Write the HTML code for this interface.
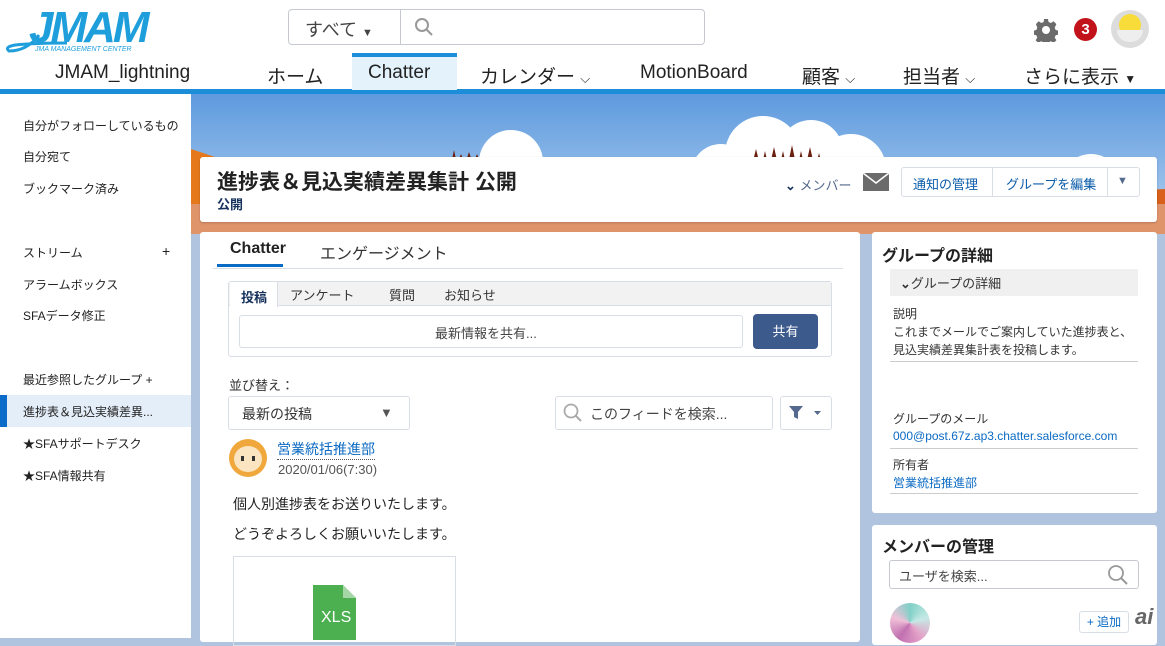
<!DOCTYPE html>
<html><head><meta charset="utf-8"><style>
*{margin:0;padding:0;box-sizing:border-box}
body{width:1165px;height:638px;overflow:hidden;position:relative;background:#b0c4df;font-family:"Liberation Sans","Noto Sans CJK JP",sans-serif;color:#16325c}
.a{position:absolute;white-space:nowrap}
.nav{font-size:19px;color:#222;top:62px}
.side{font-size:12px;color:#222;left:23px}
.btn{border:1px solid #d8dde6;background:#fff;border-radius:3px}
</style></head><body>
<!-- header -->
<div class="a" style="left:0;top:0;width:1165px;height:90px;background:#fff"></div>
<div class="a" style="left:0;top:89px;width:1165px;height:5px;background:#1c8dd8"></div>
<svg class="a" style="left:5px;top:3px" width="160" height="52" viewBox="0 0 160 52">
<text x="24" y="39" font-family="Liberation Sans" font-weight="bold" font-style="italic" font-size="44" fill="#1e9fdc" letter-spacing="-3">JMAM</text>
<path d="M34 32 Q22 48 4 48 Q-1 44 10 42 Q30 40 62 40" stroke="#1e9fdc" stroke-width="3" fill="none"/>
<text x="30" y="48" font-family="Liberation Sans" font-style="italic" font-size="7" fill="#1e9fdc">JMA MANAGEMENT CENTER</text>
</svg>
<div class="a btn" style="left:288px;top:9px;width:417px;height:36px;border-color:#c6cad0;border-radius:4px"></div>
<div class="a" style="left:400px;top:9px;width:1px;height:36px;background:#c6cad0"></div>
<div class="a" style="left:305px;top:16px;font-size:18px;color:#444">すべて <span style="font-size:11px">▼</span></div>
<svg class="a" style="left:414px;top:17px" width="20" height="20"><circle cx="8" cy="8" r="6" stroke="#999" stroke-width="2" fill="none"/><path d="M12.5 12.5L18 18" stroke="#999" stroke-width="2"/></svg>
<svg class="a" style="left:1034px;top:18px" width="24" height="24" viewBox="0 0 24 24"><path d="M10 1h4l.6 3 2.4 1 2.6-1.7 2.8 2.8L20.7 9.6l1 2.4 3 .6v4l-3 .6-1 2.4 1.7 2.6-2.8 2.8-2.6-1.7-2.4 1-.6 3h-4l-.6-3-2.4-1-2.6 1.7-2.8-2.8 1.7-2.6-1-2.4-3-.6v-4l3-.6 1-2.4L1.9 6.1 4.7 3.3 7.3 5l2.4-1z" fill="#6b6b6b"/><circle cx="12" cy="12" r="4" fill="#fff"/></svg>
<div class="a" style="left:1074px;top:18px;width:23px;height:23px;border-radius:50%;background:#c2131b;color:#fff;font-weight:bold;font-size:15px;text-align:center;line-height:23px">3</div>
<div class="a" style="left:1111px;top:10px;width:38px;height:38px;border-radius:50%;background:#dcdcdc"></div>
<div class="a" style="left:1119px;top:14px;width:22px;height:22px;border-radius:50%;background:#f8dc3a"></div>
<div class="a" style="left:1117px;top:30px;width:26px;height:12px;border-radius:0 0 13px 13px;background:#eee"></div>
<div class="a nav" style="left:55px">JMAM_lightning</div>
<div class="a nav" style="left:267px">ホーム</div>
<div class="a" style="left:352px;top:53px;width:105px;height:37px;background:#e3f2fb;border-top:4px solid #1c8dd8"></div>
<div class="a nav" style="left:368px">Chatter</div>
<div class="a nav" style="left:480px">カレンダー <span style="font-size:13px">⌵</span></div>
<div class="a nav" style="left:640px">MotionBoard</div>
<div class="a nav" style="left:802px">顧客 <span style="font-size:13px">⌵</span></div>
<div class="a nav" style="left:903px">担当者 <span style="font-size:13px">⌵</span></div>
<div class="a nav" style="left:1024px">さらに表示 <span style="font-size:12px">▼</span></div>
<!-- sidebar -->
<div class="a" style="left:0;top:94px;width:191px;height:544px;background:#fff"></div>
<div class="a side" style="top:117px">自分がフォローしているもの</div>
<div class="a side" style="top:148px">自分宛て</div>
<div class="a side" style="top:180px">ブックマーク済み</div>
<div class="a side" style="top:244px">ストリーム</div><div class="a side" style="left:162px;top:243px;font-size:14px">+</div>
<div class="a side" style="top:276px">アラームボックス</div>
<div class="a side" style="top:307px">SFAデータ修正</div>
<div class="a side" style="top:371px">最近参照したグループ +</div>
<div class="a" style="left:0;top:395px;width:191px;height:32px;background:#e4eef9"></div>
<div class="a" style="left:0;top:395px;width:7px;height:32px;background:#0a6cc8"></div>
<div class="a side" style="top:403px">進捗表＆見込実績差異...</div>
<div class="a side" style="top:435px">★SFAサポートデスク</div>
<div class="a side" style="top:467px">★SFA情報共有</div>
<!-- banner -->
<svg class="a" style="left:191px;top:94px" width="974" height="140" viewBox="0 0 974 140">
<defs><linearGradient id="g" x1="0" y1="0" x2="0" y2="1"><stop offset="0" stop-color="#5e9ade"/><stop offset="1" stop-color="#b4d2f0"/></linearGradient></defs>
<rect width="974" height="140" fill="url(#g)"/>
<circle cx="320" cy="68" r="32" fill="#fff"/>
<circle cx="572" cy="60" r="38" fill="#fff"/><circle cx="620" cy="58" r="32" fill="#fff"/><circle cx="660" cy="75" r="35" fill="#fff"/><circle cx="530" cy="80" r="30" fill="#fff"/>
<circle cx="900" cy="90" r="30" fill="#fff"/>
<path d="M560 75 l5 -20 5 20 4 -18 4 18 5 -22 5 22 4 -18 4 18 5 -24 5 24 4 -18 4 18 5 -22 5 22 4 -16 4 16z" fill="#6b2010"/>
<path d="M260 70 l3 -14 3 14 4 -10 4 10 4 -12 4 12 4 -10 4 10z" fill="#6b2010"/>
<path d="M600 140 L660 78 L720 70 L790 85 L830 140z" fill="#e57a1f"/>
<path d="M800 140 L880 100 L974 95 L974 140z" fill="#d9601a"/>
<path d="M0 140 L0 55 L30 65 L60 140z" fill="#e6781c"/>
<path d="M730 140 L830 90 L900 140z" fill="#f0902a"/>
<rect x="0" y="110" width="974" height="30" fill="#e0946a"/>
</svg>
<div class="a" style="left:200px;top:157px;width:957px;height:65px;background:#fff;border-radius:3px;box-shadow:0 1px 2px rgba(0,0,0,.2)"></div>
<div class="a" style="left:217px;top:166px;font-size:21px;font-weight:bold;color:#222">進捗表＆見込実績差異集計 公開</div>
<div class="a" style="left:217px;top:194px;font-size:13px;font-weight:bold;color:#16325c">公開</div>
<div class="a" style="left:785px;top:175px;font-size:13px;color:#54698d"><b style="color:#16325c">⌄</b> メンバー</div>
<svg class="a" style="left:863px;top:173px" width="26" height="18"><rect width="26" height="18" fill="#6b6b6b"/><path d="M0 0L13 10 26 0" stroke="#fff" stroke-width="1.5" fill="none"/></svg>
<div class="a btn" style="left:901px;top:167px;width:239px;height:30px"></div>
<div class="a" style="left:992px;top:167px;width:1px;height:30px;background:#d8dde6"></div>
<div class="a" style="left:1107px;top:167px;width:1px;height:30px;background:#d8dde6"></div>
<div class="a" style="left:913px;top:174px;font-size:13px;color:#0b5cab">通知の管理</div>
<div class="a" style="left:1006px;top:174px;font-size:13px;color:#0b5cab">グループを編集</div>
<div class="a" style="left:1117px;top:175px;font-size:11px;color:#54698d">▼</div>
<!-- main card -->
<div class="a" style="left:200px;top:232px;width:660px;height:410px;background:#fff;border-radius:3px"></div>
<div class="a" style="left:230px;top:240px;font-size:16px;font-weight:bold;color:#222">Chatter</div>
<div class="a" style="left:320px;top:240px;font-size:16px;color:#333">エンゲージメント</div>
<div class="a" style="left:213px;top:268px;width:630px;height:1px;background:#d8dde6"></div>
<div class="a" style="left:217px;top:264px;width:66px;height:3px;background:#0b6ac3"></div>
<div class="a" style="left:228px;top:281px;width:604px;height:76px;border:1px solid #d8dde6;border-radius:3px"></div>
<div class="a" style="left:229px;top:282px;width:602px;height:24px;background:#f2f2f2;border-bottom:1px solid #d8dde6"></div>
<div class="a" style="left:230px;top:282px;width:48px;height:25px;background:#fff;border-right:1px solid #d8dde6"></div>
<div class="a" style="left:241px;top:287px;font-size:13px;font-weight:bold;color:#16325c">投稿</div>
<div class="a" style="left:290px;top:285px;font-size:13px;color:#333">アンケート</div>
<div class="a" style="left:389px;top:285px;font-size:13px;color:#333">質問</div>
<div class="a" style="left:444px;top:285px;font-size:13px;color:#333">お知らせ</div>
<div class="a btn" style="left:239px;top:315px;width:504px;height:33px"></div>
<div class="a" style="left:435px;top:323px;font-size:13px;color:#444">最新情報を共有...</div>
<div class="a" style="left:753px;top:314px;width:65px;height:35px;background:#3c5a8c;border-radius:4px;color:#fff;font-size:13px;text-align:center;line-height:35px">共有</div>
<div class="a" style="left:229px;top:375px;font-size:13px;color:#333">並び替え：</div>
<div class="a btn" style="left:228px;top:396px;width:182px;height:34px"></div>
<div class="a" style="left:242px;top:404px;font-size:14px;color:#333">最新の投稿</div>
<div class="a" style="left:380px;top:405px;font-size:13px;color:#555">▼</div>
<div class="a btn" style="left:555px;top:396px;width:218px;height:34px"></div>
<svg class="a" style="left:563px;top:403px" width="20" height="20"><circle cx="8" cy="8" r="6.5" stroke="#aaa" stroke-width="1.8" fill="none"/><path d="M12.5 12.5L18 18" stroke="#aaa" stroke-width="2"/></svg>
<div class="a" style="left:590px;top:404px;font-size:14px;color:#444">このフィードを検索...</div>
<div class="a btn" style="left:780px;top:396px;width:52px;height:34px"></div>
<svg class="a" style="left:789px;top:405px" width="36" height="16"><path d="M0 1h14L9 7v7l-4-2V7z" fill="#54698d"/><path d="M25 6h7l-3.5 4z" fill="#54698d"/></svg>
<div class="a" style="left:229px;top:439px;width:38px;height:38px;border-radius:50%;background:#f0a83c"></div>
<div class="a" style="left:234px;top:446px;width:28px;height:26px;border-radius:50%;background:#fbe5c0"></div>
<div class="a" style="left:241px;top:456px;width:3px;height:5px;background:#333"></div>
<div class="a" style="left:252px;top:456px;width:3px;height:5px;background:#333"></div>
<div class="a" style="left:277px;top:439px;font-size:14px;color:#0b6ac3;border-bottom:1px dotted #555">営業統括推進部</div>
<div class="a" style="left:278px;top:462px;font-size:13px;color:#555">2020/01/06(7:30)</div>
<div class="a" style="left:233px;top:494px;font-size:14px;color:#222">個人別進捗表をお送りいたします。</div>
<div class="a" style="left:233px;top:524px;font-size:14px;color:#222">どうぞよろしくお願いいたします。</div>
<div class="a" style="left:233px;top:556px;width:223px;height:90px;border:1px solid #d8dde6"></div>
<svg class="a" style="left:313px;top:585px" width="43" height="55"><path d="M0 0h30l13 13v42H0z" fill="#4caf50"/><path d="M30 0v13h13z" fill="#a5d6a7"/><text x="8" y="37" font-family="Liberation Sans" font-size="16" fill="#fff">XLS</text></svg>
<!-- right -->
<div class="a" style="left:872px;top:232px;width:285px;height:281px;background:#fff;border-radius:3px"></div>
<div class="a" style="left:882px;top:242px;font-size:16px;font-weight:bold;color:#222">グループの詳細</div>
<div class="a" style="left:890px;top:269px;width:248px;height:27px;background:#f0f0f0"></div>
<div class="a" style="left:900px;top:273px;font-size:13px;color:#333"><b>⌄</b>グループの詳細</div>
<div class="a" style="left:893px;top:305px;font-size:12px;color:#333;line-height:18px">説明<br>これまでメールでご案内していた進捗表と、<br>見込実績差異集計表を投稿します。</div>
<div class="a" style="left:890px;top:361px;width:248px;height:1px;background:#ccc"></div>
<div class="a" style="left:893px;top:410px;font-size:12px;color:#333">グループのメール</div>
<div class="a" style="left:893px;top:429px;font-size:12px;color:#0b6ac3">000@post.67z.ap3.chatter.salesforce.com</div>
<div class="a" style="left:890px;top:448px;width:248px;height:1px;background:#ccc"></div>
<div class="a" style="left:893px;top:456px;font-size:12px;color:#333">所有者</div>
<div class="a" style="left:893px;top:474px;font-size:12px;color:#0b6ac3">営業統括推進部</div>
<div class="a" style="left:890px;top:493px;width:248px;height:1px;background:#ccc"></div>
<div class="a" style="left:872px;top:525px;width:285px;height:120px;background:#fff;border-radius:3px"></div>
<div class="a" style="left:882px;top:533px;font-size:16px;font-weight:bold;color:#222">メンバーの管理</div>
<div class="a btn" style="left:889px;top:560px;width:250px;height:29px;border-color:#c6cad0"></div>
<div class="a" style="left:899px;top:566px;font-size:13px;color:#444">ユーザを検索...</div>
<svg class="a" style="left:1107px;top:564px" width="22" height="22"><circle cx="9" cy="9" r="7" stroke="#999" stroke-width="1.8" fill="none"/><path d="M14 14L20 20" stroke="#999" stroke-width="2"/></svg>
<div class="a" style="left:890px;top:603px;width:40px;height:40px;border-radius:50%;background:conic-gradient(#7fd0c8,#c6e9e4,#e4a0c8,#c070b0,#f0c0d8,#7fd0c8)"></div>
<div class="a btn" style="left:1079px;top:611px;width:50px;height:22px;font-size:12px;color:#0b6ac3;text-align:center;line-height:20px">+ 追加</div>
<div class="a" style="left:1135px;top:604px;font-size:22px;font-weight:bold;font-style:italic;color:#666">ai</div>
</body></html>
